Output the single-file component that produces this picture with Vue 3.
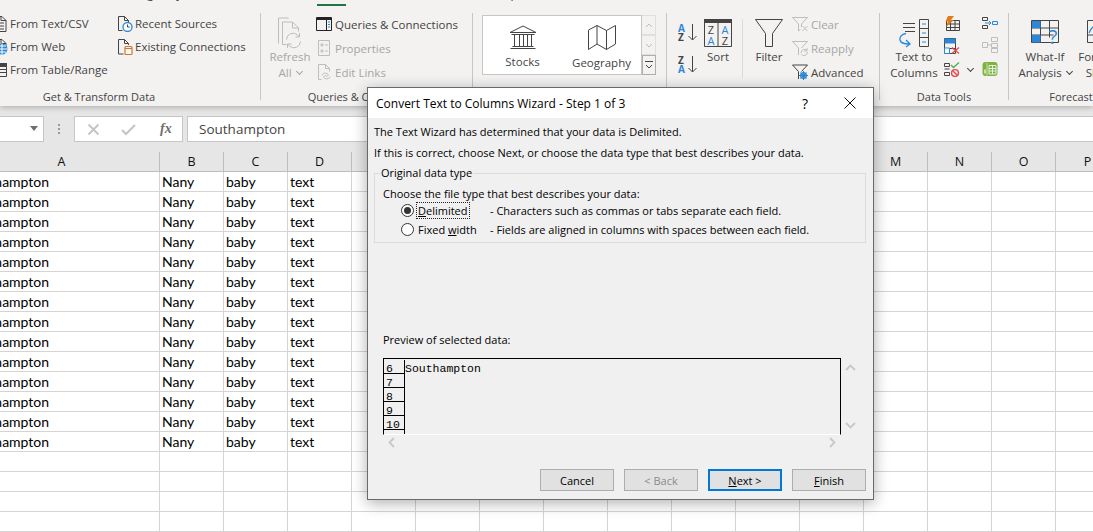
<template>
  <div class="excel">
    <div class="top">
      <div class="tabs">
        <span v-for="tab in tabs" :key="tab.name" class="tab" :class="{ active: tab.active }" :style="{ width: tab.width + 'px', marginRight: (tab.after || 0) + 'px' }">{{ tab.name }}</span>
      </div>
      <div class="ribbon">
        <!-- Get & Transform Data -->
        <section class="group g1">
          <div class="group-body">
            <div class="small-col first">
              <div class="small tight">
                <svg class="ico" viewBox="0 0 16 16"><path d="M2 .5h8l4 4v11H2z" class="ln" /><path d="M9 .5v4h5M5 7h7M5 10h7M5 13h7" class="ln" /></svg>
                <span>From Text/CSV</span>
              </div>
              <div class="small tight">
                <svg class="ico" viewBox="0 0 16 16"><path d="M2 .5h8l4 4v5" class="ln" /><path d="M9 .5v4h5" class="ln" /><circle cx="10" cy="10" r="5.5" fill="#2b88d8" /><path d="M4.5 10h11M10 4.5v11M6 7h8M6 13h8" stroke="#fff" stroke-width="1" fill="none" /></svg>
                <span>From Web</span>
              </div>
              <div class="small tight">
                <svg class="ico" viewBox="0 0 16 16"><path d="M1.500 1.500h13v13h-13z" class="ln" /><path d="M1.500 4.500h13M1.500 7.500h13M1.500 10.500h13" class="ln" /><path d="M1 1h14v3H1z" fill="#444" /></svg>
                <span>From Table/Range</span>
              </div>
            </div>
            <div class="small-col second">
              <div class="small tight">
                <svg class="ico" viewBox="0 0 16 16"><path d="M1.500 14.500V.5h6l4 4V7M7.500.5v4h4M1.500 14.500h4" class="ln" /><circle cx="10.500" cy="11" r="4.500" fill="#fff" stroke="#2b88d8" stroke-width="1.300" /><path d="M10.500 8.500V11h2.200" stroke="#444" fill="none" /></svg>
                <span>Recent Sources</span>
              </div>
              <div class="small tight">
                <svg class="ico" viewBox="0 0 16 16"><path d="M1.500 15V.5h6l4 4V6M7.500.5v4h4M1.500 15h5" class="ln" /><rect x="8" y="7.500" width="7" height="8" rx="1" fill="#fff" stroke="#d8732a" stroke-width="1.200" /><path d="M8 9.500h7" stroke="#d8732a" stroke-width="1.200" /></svg>
                <span>Existing Connections</span>
              </div>
            </div>
          </div>
          <div class="group-label">Get &amp; Transform Data</div>
        </section>

        <!-- Queries & Connections -->
        <section class="group g2">
          <div class="group-body">
            <div class="big refresh disabled">
              <svg class="big-ico" width="24" height="31" viewBox="0 0 24 31"><path d="M.5 26V.5h10M4.500 27V4.500h10l6 6V14M14.500 4.500v6h6M4.500 27h4" class="ln off" /><path d="M8.500 22a6.500 6.500 0 0 1 11-4.500l2 2M22.500 24a6.500 6.500 0 0 1-11 4.500l-2-2M21.500 15.500v4h-4M9.500 30.500v-4h4" class="ln off" /></svg>
              <span>Refresh</span>
              <span>All <i class="chev"></i></span>
            </div>
            <div class="small-col">
              <div class="small">
                <svg class="ico" viewBox="0 0 16 14"><path d="M.5.5h15v13H.5z" class="ln strong" /><path d="M.5 2h15" stroke="#222" stroke-width="2" /><path d="M10.500 2v11" stroke="#222" /><path d="M12 5h2M12 7.500h2M12 10h2" stroke="#2b88d8" fill="none" /></svg>
                <span>Queries &amp; Connections</span>
              </div>
              <div class="small disabled">
                <svg class="ico" viewBox="0 0 16 16"><path d="M2.500.5h11v15h-11z" class="ln off" /><path d="M5 4h2v2H5zM5 10h2v2H5zM9 5h3M9 11h3" class="ln off" /></svg>
                <span>Properties</span>
              </div>
              <div class="small disabled">
                <svg class="ico" viewBox="0 0 16 16"><path d="M2.500 15.500V.5h7l4 4v3M9.500.5v4h4M2.500 15.500h3" class="ln off" /><path d="M6 11.500c0-2 3-3 5-2s1 3-1 3M14 12.500c0 2-3 3-5 2s-1-3 1-3" class="ln off" /></svg>
                <span>Edit Links</span>
              </div>
            </div>
          </div>
          <div class="group-label">Queries &amp; Connections</div>
        </section>

        <!-- Data Types -->
        <section class="group g3">
          <div class="group-body">
            <div class="gallery">
              <div class="gallery-item">
                <svg width="28" height="24" viewBox="0 0 28 24"><path d="M1 7.500 14 1l13 6.500M1 7.500h26M2.500 9.500h23M3.500 21.500h21M1.500 23.500h25M5.500 10v11M10.500 10v11M14.500 10v11M18.500 10v11M22.500 10v11" class="ln" /></svg>
                <span>Stocks</span>
              </div>
              <div class="gallery-item">
                <svg width="28" height="25" viewBox="0 0 28 25"><path d="M.5 5 9 .5l9.500 5 9-5V19l-9 5.500L9 19l-8.500 5.500zM9 .5V19M18.500 5.500v19" class="ln" /></svg>
                <span>Geography</span>
              </div>
            </div>
            <div class="gallery-scroll">
              <div class="gs-btn"><svg width="8" height="5" viewBox="0 0 8 5"><path d="M1 4l3-3 3 3" class="ln off" /></svg></div>
              <div class="gs-btn"><svg width="8" height="5" viewBox="0 0 8 5"><path d="M1 1l3 3 3-3" class="ln off" /></svg></div>
              <div class="gs-btn on"><svg width="8" height="8" viewBox="0 0 8 8"><path d="M0 .5h8M1 4l3 3 3-3" class="ln" /></svg></div>
            </div>
          </div>
          <div class="group-label">Data Types</div>
        </section>

        <!-- Sort & Filter -->
        <section class="group g4">
          <div class="group-body">
            <div class="sort-col">
              <svg width="19" height="18" viewBox="0 0 19 18"><text x="0" y="8.500" class="az blue">A</text><text x="0" y="17.500" class="az">Z</text><path d="M14.500 1v16M10.500 13l4 4 4-4" class="ln" /></svg>
              <svg width="19" height="18" viewBox="0 0 19 18"><text x="0" y="8.500" class="az">Z</text><text x="0" y="17.500" class="az blue">A</text><path d="M14.500 1v16M10.500 13l4 4 4-4" class="ln" /></svg>
            </div>
            <div class="big sort">
              <svg class="big-ico" width="28" height="28" viewBox="0 0 28 28"><path d="M.5.5h27v27H.5zM14 4v24" class="ln" /><path d="M0 0h28v4H0z" fill="#444" /><text x="7" y="15" class="tile">Z</text><text x="7" y="26" class="tile blue">A</text><text x="21" y="15" class="tile blue">A</text><text x="21" y="26" class="tile">Z</text></svg>
              <span>Sort</span>
            </div>
            <div class="soft-sep"></div>
            <div class="big filter">
              <svg class="big-ico" width="28" height="28" viewBox="0 0 28 28"><path d="M.5.5h27L17.500 14.500v13h-7v-13z" class="ln" /></svg>
              <span>Filter</span>
            </div>
            <div class="small-col">
              <div class="small disabled">
                <svg class="ico" viewBox="0 0 16 16"><path d="M.5 1.500h15L9.500 8v3M.5 1.500 6.500 8v7l2-1.500" class="ln off" /><path d="M10.500 10l5 5M15.500 10l-5 5" class="ln off" /></svg>
                <span>Clear</span>
              </div>
              <div class="small disabled">
                <svg class="ico" viewBox="0 0 16 16"><path d="M.5 1.500h15L9.500 8M.5 1.500 6.500 8v7" class="ln off" /><path d="M9 13a3.500 3.500 0 0 1 6-2.500M15.500 12a3.500 3.500 0 0 1-6 2.500M15 8v3h-3" class="ln off" /></svg>
                <span>Reapply</span>
              </div>
              <div class="small">
                <svg class="ico" viewBox="0 0 16 16"><path d="M.5 1h15L9.500 7.500M.5 1l6 6.500V15" class="ln" /><circle cx="11.500" cy="11.500" r="2.800" fill="none" stroke="#2b88d8" stroke-width="1.500" /><path d="M11.500 7v9M7 11.500h9M8.500 8.500l6 6M14.500 8.500l-6 6" stroke="#2b88d8" stroke-width="1" /></svg>
                <span>Advanced</span>
              </div>
            </div>
          </div>
          <div class="group-label">Sort &amp; Filter</div>
        </section>

        <!-- Data Tools -->
        <section class="group g5">
          <div class="group-body">
            <div class="big ttc">
              <svg class="big-ico" width="31" height="28" viewBox="0 0 31 28"><path d="M20.500.5h9v27h-9zM20.500 9.500h9M20.500 18.500h9" class="ln" /><path d="M4 4.500h12M4 8.500h12M6 12.500h10" class="ln" /><path d="M23 5h4M23 14h4M23 23h4" stroke="#2b88d8" fill="none" /><path d="M7 14.500C2 15 .5 19 1 21c.5 2.500 3 4 9 4M7 21l4 4-4 3" fill="none" stroke="#2b88d8" stroke-width="1.300" /></svg>
              <span>Text to</span>
              <span>Columns</span>
            </div>
            <div class="tool-col">
              <svg width="16" height="16" viewBox="0 0 16 16"><path d="M2.500 4.500h13v10h-13zM2.500 8h13M2.500 11.500h13M6.500 4.500v10M11 4.500v10" class="ln" /><path d="M4 0h6L7 4h3L2 11l2-5.500H1.500z" fill="#e07b1a" /></svg>
              <svg width="16" height="16" viewBox="0 0 16 16"><path d="M.5.500h11v15H.5zM.5 10.500h11" class="ln" /><path d="M.5.500h11v5H.5z" fill="#2b88d8" /><path d="M.5 10h5v5.500h-5z" fill="#fff" stroke="#2b88d8" /><path d="M8 9.500l7 6M15 9.500l-7 6" stroke="#e5484d" stroke-width="1.300" /></svg>
              <div class="tool-with-chev">
                <svg width="16" height="15" viewBox="0 0 16 15"><path d="M.5 1.500h5v3h-5zM.5 10.500h5v3h-5zM.5 7h5" class="ln" /><path d="M7 3l2.500 2.500L15 .5" fill="none" stroke="#4caf50" stroke-width="1.300" /><circle cx="11" cy="11" r="3.400" fill="none" stroke="#e5484d" stroke-width="1.400" /><path d="M8.700 8.700l4.600 4.600" stroke="#e5484d" stroke-width="1.400" /></svg>
                <i class="chev dark"></i>
              </div>
            </div>
            <div class="tool-col third">
              <svg width="16" height="12" viewBox="0 0 16 12"><path d="M.5.500h5v3h-5zM.5 8.500h5v3h-5z" class="ln" /><path d="M10.500 4.500h5v3h-5z" fill="none" stroke="#2b88d8" /><path d="M3 6h6M7 4l2 2-2 2" fill="none" stroke="#2b88d8" /></svg>
              <svg width="16" height="16" viewBox="0 0 16 16"><path d="M.5 5.500h5v5h-5zM9.500.5h6v4h-6zM9.500 6.500h6v4h-6zM9.500 11.500h6v4h-6zM5.500 8h4" class="ln off" /></svg>
              <svg width="16" height="16" viewBox="0 0 16 16"><rect x=".5" y="1" width="15" height="14" rx="3" fill="#7cb342" /><path d="M5 2v13" stroke="#c5e1a5" /><path d="M7 4.500h7v8.500H7zM7 7.500h7M7 10h7M10.500 4.500V13" fill="none" stroke="#fff" stroke-width=".8" /><path d="M3 8.500v4" stroke="#fff" stroke-width="1.200" /></svg>
            </div>
          </div>
          <div class="group-label">Data Tools</div>
        </section>

        <!-- Forecast -->
        <section class="group g6">
          <div class="group-body">
            <div class="big whatif">
              <svg class="big-ico wide" width="29" height="28" viewBox="0 0 29 28"><path d="M.5 3.500h27v22H.5zM.5 11h27M.5 18h22M9.500 3.500v22M18.500 3.500v17" class="ln" /><path d="M1 4h8.500v7H1zM1 18h8.500v7.500H1z" fill="#2b88d8" /><text x="22" y="27" class="qmark">?</text></svg>
              <span>What-If</span>
              <span>Analysis <i class="chev dark"></i></span>
            </div>
            <div class="big sheet">
              <svg class="big-ico wide" width="28" height="28" viewBox="0 0 28 28"><path d="M.5 3.500h27v22H.5zM.5 18h27" class="ln" /><path d="M2 16c4-9 8-9 12-5s6 2 10-4" fill="none" stroke="#2b88d8" stroke-width="1.300" /></svg>
              <span>Forecast</span>
              <span>Sheet</span>
            </div>
          </div>
          <div class="group-label">Forecast</div>
        </section>
      </div>
    </div>

    <div class="formula-bar">
      <div class="name-box"><i class="caret"></i></div>
      <div class="grip"></div>
      <div class="fx-box">
        <svg width="13" height="13" viewBox="0 0 13 13"><path d="M1.500 1.500l10 10M11.500 1.500l-10 10" stroke="#c4c4c4" stroke-width="1.800" /></svg>
        <svg width="15" height="13" viewBox="0 0 15 13"><path d="M1 7l4 4 9-9" fill="none" stroke="#c4c4c4" stroke-width="2" /></svg>
        <span class="fx">fx</span>
      </div>
      <div class="formula-input">Southampton</div>
    </div>

    <div class="sheet-grid">
      <div class="head-row">
        <div v-for="col in columns" :key="col.name" class="head-cell" :class="{ wide: col.name === 'A' }">{{ col.name }}</div>
      </div>
      <div v-for="(row, i) in rows" :key="i" class="row">
        <div v-for="(col, c) in columns" :key="col.name" class="cell" :class="{ wide: col.name === 'A' }">{{ row[c] }}</div>
      </div>
    </div>

    <div class="dialog">
      <div class="title-bar">
        <span class="title">Convert Text to Columns Wizard - Step 1 of 3</span>
        <span class="help">?</span>
        <svg class="close" width="12" height="12" viewBox="0 0 12 12"><path d="M.5.500l11 11M11.500.500l-11 11" stroke="#111" fill="none" /></svg>
      </div>
      <div class="dialog-body">
        <p class="line">The Text Wizard has determined that your data is Delimited.</p>
        <p class="line second-line">If this is correct, choose Next, or choose the data type that best describes your data.</p>

        <div class="data-type">
          <span class="legend">Original data type</span>
          <div class="line">Choose the file type that best describes your data:</div>
          <div class="radio-row first-radio">
            <span class="radio checked"></span>
            <span class="radio-label"><span class="focus"><u>D</u>elimited</span></span>
            <span>- Characters such as commas or tabs separate each field.</span>
          </div>
          <div class="radio-row">
            <span class="radio"></span>
            <span class="radio-label">Fixed <u>w</u>idth</span>
            <span>- Fields are aligned in columns with spaces between each field.</span>
          </div>
        </div>

        <div class="line preview-label">Preview of selected data:</div>
        <div class="preview-row">
          <div class="preview">
            <div v-for="line in preview" :key="line.num" class="p-line">
              <span class="p-num">{{ line.num }}</span>
              <span class="p-text">{{ line.text }}</span>
            </div>
          </div>
          <div class="v-scroll">
            <svg width="11" height="7" viewBox="0 0 11 7"><path d="M1 6l4.500-4.500L10 6" class="arrow" /></svg>
            <svg width="11" height="7" viewBox="0 0 11 7"><path d="M1 1l4.500 4.500L10 1" class="arrow" /></svg>
          </div>
        </div>
        <div class="h-scroll">
          <svg width="7" height="11" viewBox="0 0 7 11"><path d="M6 1 1.500 5.500 6 10" class="arrow" /></svg>
          <svg width="7" height="11" viewBox="0 0 7 11"><path d="M1 1l4.500 4.500L1 10" class="arrow" /></svg>
        </div>

        <div class="buttons">
          <button class="btn">Cancel</button>
          <button class="btn off">&lt; Back</button>
          <button class="btn primary"><u>N</u>ext &gt;</button>
          <button class="btn"><u>F</u>inish</button>
        </div>
      </div>
    </div>
  </div>
</template>

<script setup>
const tabs = [
  { name: 'Page Layout', width: 89 },
  { name: 'Formulas', width: 95 },
  { name: 'Data', width: 29, after: 30, active: true },
  { name: 'Review', width: 62 },
  { name: 'View', width: 54 },
  { name: 'Help', width: 40 }
]

const columns = 'ABCDEFGHIJKLMNOP'.split('').map((name) => ({ name }))

const rows = []
for (let i = 0; i < 18; i++) {
  rows.push(i < 14 ? ['Southampton', 'Nany', 'baby', 'text'] : [])
}

const preview = [
  { num: 6, text: 'Southampton' },
  { num: 7, text: '' },
  { num: 8, text: '' },
  { num: 9, text: '' },
  { num: 10, text: '' },
  { num: '', text: '' }
]
</script>

<style>
html,
body {
  margin: 0;
  overflow: hidden;
  background: #fff;
}
</style>

<style scoped>
.excel {
  position: relative;
  width: 1093px;
  height: 532px;
  overflow: hidden;
  background: #fff;
  font-family: "Open Sans", "Noto Sans", sans-serif;
  font-size: 11.5px;
  color: #444;
}

.top {
  position: relative;
  z-index: 2;
  height: 106px;
  background: #f3f2f1;
  box-shadow: 0 1px 6px rgba(0, 0, 0, 0.28);
}

.tabs {
  display: flex;
  height: 6px;
  padding-left: 133px;
  overflow: hidden;
}

.tab {
  margin-top: -14px;
  height: 20px;
  line-height: 16px;
  font-size: 12px;
  flex: none;
}

.tab.active {
  color: #217346;
  box-shadow: inset 0 -2px 0 #217346;
}

.ribbon {
  display: flex;
  padding-top: 7px;
}

.group {
  flex: none;
  box-sizing: border-box;
  height: 87px;
  border-right: 1px solid #c8c6c4;
  display: flex;
  flex-direction: column;
}

.g1 { width: 261px; }
.g2 { width: 212px; }
.g3 { width: 194px; }
.g4 { width: 213px; }
.g5 { width: 129px; }
.g6 { width: 124px; border-right: 0; }

.group-body {
  flex: none;
  height: 76px;
  display: flex;
}

.group-label {
  flex: none;
  height: 16px;
  line-height: 16px;
  font-size: 11px;
  text-align: center;
  white-space: nowrap;
}

.g1 .group-label {
  padding-right: 62px;
}

.ln {
  fill: none;
  stroke: #444;
  stroke-width: 1;
}

.ln.off {
  stroke: #bdbdbd;
}

.ln.strong {
  stroke: #222;
}

.small-col {
  display: flex;
  flex-direction: column;
  margin-top: -1px;
}

.small-col.first {
  margin-left: -8px;
  width: 125px;
}

.small {
  height: 24px;
  display: flex;
  align-items: center;
  gap: 3px;
  white-space: nowrap;
}

.small.tight {
  height: 23px;
  gap: 2px;
}

.ico {
  width: 16px;
  height: 16px;
  flex: none;
}

.disabled {
  color: #a6a6a6;
}

.big {
  display: flex;
  flex-direction: column;
  align-items: center;
  padding-top: 4px;
  line-height: 16px;
  white-space: nowrap;
  flex: none;
}

.big-ico {
  height: 32px;
  flex: none;
}

.big-ico.wide {
  height: 28px;
  padding-bottom: 4px;
}

.chev {
  display: inline-block;
  width: 4px;
  height: 4px;
  border-right: 1px solid #a6a6a6;
  border-bottom: 1px solid #a6a6a6;
  transform: rotate(45deg);
  margin: 0 0 3px 2px;
}

.chev.dark {
  border-color: #444;
}

.refresh {
  width: 50px;
  margin-left: 4px;
  margin-right: 1px;
}

.gallery {
  margin: 2px 0 0 9px;
  width: 160px;
  height: 60px;
  box-sizing: border-box;
  background: #fff;
  border: 1px solid #c8c6c4;
  display: flex;
}

.gallery-item {
  width: 79px;
  display: flex;
  flex-direction: column;
  align-items: center;
  padding-top: 9px;
  gap: 5px;
}

.gallery-scroll {
  display: flex;
  flex-direction: column;
  margin-top: 2px;
  width: 14px;
  height: 60px;
}

.gs-btn {
  flex: 1;
  box-sizing: border-box;
  display: flex;
  align-items: center;
  justify-content: center;
  background: #f3f2f1;
  border: 1px solid #e1dfdd;
  border-left: 0;
}

.gs-btn.on {
  border: 1px solid #b0aeac;
}

.sort-col {
  display: flex;
  flex-direction: column;
  gap: 14px;
  margin: 10px 0 0 11px;
  width: 26px;
}

.az {
  font-family: "Open Sans", sans-serif;
  font-size: 10px;
  font-weight: 700;
  fill: #444;
}

.az.blue,
.tile.blue {
  fill: #2b88d8;
}

.tile {
  font-family: "Open Sans", sans-serif;
  font-size: 11px;
  text-anchor: middle;
  fill: #444;
}

.sort {
  width: 28px;
}

.soft-sep {
  width: 1px;
  height: 59px;
  margin: 6px 0 0 10px;
  background: #dcdbd9;
}

.filter {
  width: 50px;
  margin-left: 1px;
}

.filter + .small-col {
  margin-left: -2px;
}

.ttc {
  width: 66px;
  margin-left: 1px;
}

.tool-col {
  flex: none;
  display: flex;
  flex-direction: column;
  gap: 6px;
  padding-top: 3px;
  margin-left: -3px;
  width: 38px;
}

.tool-with-chev {
  display: flex;
  align-items: center;
  gap: 6px;
  margin-top: 2px;
}

.tool-col.third {
  padding-top: 4px;
  gap: 8px;
  margin-left: 0;
  width: 20px;
}

.whatif {
  width: 64px;
  margin-left: 4px;
  margin-right: -1px;
}

.sheet {
  width: 50px;
}

.qmark {
  font-family: "Open Sans", sans-serif;
  font-size: 20px;
  text-anchor: middle;
  fill: #2b88d8;
}

.formula-bar {
  height: 36px;
  box-sizing: border-box;
  background: #e6e6e6;
  padding-top: 10px;
  display: flex;
}

.name-box,
.fx-box,
.formula-input {
  height: 26px;
  box-sizing: border-box;
  background: #fff;
  border: 1px solid #c6c6c6;
}

.name-box {
  width: 45px;
  margin-left: -1px;
  position: relative;
  flex: none;
}

.caret {
  position: absolute;
  left: 30px;
  top: 9px;
  border: 4px solid transparent;
  border-top: 5px solid #6e6e6e;
  border-bottom: 0;
}

.grip {
  width: 2px;
  height: 10px;
  margin: 8px 14px 0 14px;
  background: repeating-linear-gradient(#9a9a9a 0 2px, transparent 2px 4px);
  flex: none;
}

.fx-box {
  width: 109px;
  margin-right: 4px;
  flex: none;
  display: flex;
  align-items: center;
  padding-left: 12px;
  gap: 21px;
}

.fx {
  font-family: "Liberation Serif", serif;
  font-style: italic;
  font-weight: 700;
  font-size: 14px;
  color: #6e6e6e;
  margin-left: 3px;
}

.formula-input {
  flex: 1;
  border-right: 0;
  padding-left: 11px;
  line-height: 24px;
  font-size: 13.5px;
}

.sheet-grid {
  margin-left: -36px;
  width: 1200px;
  font-family: Lato, "Liberation Sans", sans-serif;
  font-size: 14px;
  color: #000;
}

.head-row {
  display: flex;
  height: 30px;
  box-sizing: border-box;
  padding-top: 10px;
  background: #e6e6e6;
}

.head-cell {
  width: 64px;
  box-sizing: border-box;
  height: 20px;
  border-right: 1px solid #bdbdbd;
  border-bottom: 1px solid #bdbdbd;
  text-align: center;
  line-height: 19px;
  flex: none;
  color: #111;
  font-family: "Open Sans", sans-serif;
  font-size: 12.5px;
}

.row {
  display: flex;
  height: 20px;
}

.cell {
  width: 64px;
  height: 20px;
  box-sizing: border-box;
  border-right: 1px solid #d4d4d4;
  border-bottom: 1px solid #d4d4d4;
  padding-left: 2px;
  line-height: 20px;
  flex: none;
  overflow: hidden;
  white-space: nowrap;
}

.head-cell.wide,
.cell.wide {
  width: 196px;
}

.dialog {
  position: absolute;
  left: 367px;
  top: 87px;
  z-index: 3;
  width: 507px;
  height: 413px;
  box-sizing: border-box;
  border: 1px solid #6a6a6a;
  background: #f0f0f0;
  box-shadow: 0 3px 14px rgba(0, 0, 0, 0.32);
  font-size: 11px;
  color: #000;
  display: flex;
  flex-direction: column;
}

.title-bar {
  height: 30px;
  flex: none;
  background: #fff;
  display: flex;
  align-items: center;
  padding-left: 8px;
}

.title {
  font-size: 12px;
  flex: 1;
}

.help {
  font-size: 14px;
  width: 78px;
  text-align: center;
}

.close {
  margin-right: 17px;
}

.dialog-body {
  padding: 6px 7px 0 6px;
  display: flex;
  flex-direction: column;
  flex: 1;
}

.line {
  margin: 0;
  height: 16px;
  line-height: 16px;
  white-space: nowrap;
}

.second-line {
  margin-top: 5px;
}

.data-type {
  position: relative;
  margin-top: 12px;
  height: 70px;
  box-sizing: border-box;
  border: 1px solid #dcdcdc;
  padding: 12px 8px 0;
}

.legend {
  position: absolute;
  left: 5px;
  top: -9px;
  padding: 0 1px;
  background: #f0f0f0;
  line-height: 16px;
}

.radio-row {
  display: flex;
  align-items: center;
  height: 16px;
  margin-top: 3px;
  margin-left: 18px;
  white-space: nowrap;
}

.first-radio {
  margin-top: 0;
}

.radio {
  width: 13px;
  height: 13px;
  box-sizing: border-box;
  border: 1px solid #333;
  border-radius: 50%;
  background: #fff;
  flex: none;
  position: relative;
}

.radio.checked::after {
  content: "";
  position: absolute;
  inset: 2px;
  background: #333;
  border-radius: 50%;
}

.radio-label {
  width: 72px;
  margin-left: 4px;
  flex: none;
}

.focus {
  outline: 1px dotted #222;
  padding: 0 1px;
  margin-left: -1px;
}

.preview-label {
  margin-top: 89px;
  margin-left: 9px;
}

.preview-row {
  display: flex;
  margin: 10px 0 0 9px;
  height: 77px;
  flex: none;
}

.preview {
  width: 458px;
  height: 77px;
  box-sizing: border-box;
  padding-top: 1px;
  border: 1px solid #000;
  border-bottom: 1px solid #fff;
  overflow: hidden;
  font-family: "Liberation Mono", monospace;
  font-size: 11.5px;
  line-height: 17px;
}

.p-line {
  display: flex;
  height: 14px;
}

.p-num {
  width: 21px;
  height: 14px;
  box-sizing: border-box;
  border-right: 1px solid #000;
  border-bottom: 1px solid #000;
  padding-left: 2px;
  flex: none;
  overflow: hidden;
}

.v-scroll {
  width: 18px;
  display: flex;
  flex-direction: column;
  justify-content: space-between;
  align-items: center;
  padding: 6px 0 6px;
  box-sizing: border-box;
}

.arrow {
  fill: none;
  stroke: #c8c8c8;
  stroke-width: 1.800;
}

.h-scroll {
  margin: 0 0 0 9px;
  width: 458px;
  height: 15px;
  box-sizing: border-box;
  padding: 0 5px;
  display: flex;
  justify-content: space-between;
  align-items: center;
}

.buttons {
  display: flex;
  justify-content: flex-end;
  gap: 10px;
  margin-top: 19px;
}

.btn {
  width: 74px;
  height: 22px;
  box-sizing: border-box;
  padding: 0;
  background: #e1e1e1;
  border: 1px solid #adadad;
  border-radius: 0;
  font-family: inherit;
  font-size: 11px;
  color: #000;
}

.btn.off {
  color: #8a8a8a;
}

.btn.primary {
  border: 2px solid #0078d7;
}
</style>
